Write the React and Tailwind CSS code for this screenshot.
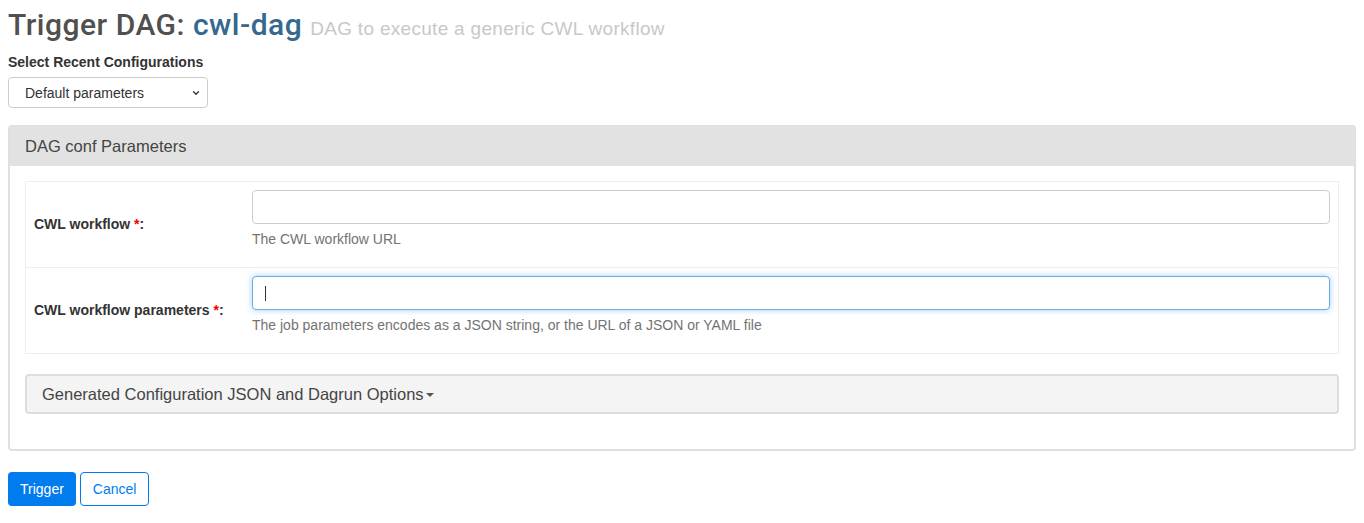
import { ChevronDown } from "lucide-react";

function FieldRow({ label, help, focused, last }) {
    return (
        <div className={`flex ${last ? "" : "border-b border-[#eee]"}`}>
            {/* label cell */}
            <div className="w-[218px] shrink-0 px-2 flex items-center">
                <label className="text-[14px] font-bold text-[#333]">
                    {label} <span className="text-[#e00]">*</span>:
                </label>
            </div>
            {/* input cell */}
            <div className="flex-1 px-2 pt-2 pb-2">
                <div
                    className={`h-[34px] rounded-[4px] border bg-white flex items-center px-3 ${
                        focused
                            ? "border-[#66afe9] shadow-[0_0_6px_rgba(102,175,233,0.6)]"
                            : "border-[#ccc]"
                    }`}
                >
                    {focused && <span className="block w-px h-[15px] bg-[#333]" />}
                </div>
                <p className="mt-[5px] mb-[10px] text-[14px] leading-[20px] text-[#737373]">{help}</p>
            </div>
        </div>
    );
}

export default function App() {
    return (
        <div className="px-2 pb-4 font-['Liberation_Sans',Arial,sans-serif] text-[#333]">
            {/* Title */}
            <h2 className="pt-2 h-[41px] text-[30px] leading-[33px] tracking-[0.5px] font-medium font-['Roboto',Arial,sans-serif] text-[#51504f]">
                Trigger DAG: <span className="text-[#34688f]">cwl-dag</span>{" "}
                <small className="text-[19px] leading-none tracking-[0.3px] font-normal font-['Liberation_Sans',Arial,sans-serif] text-[#c8c8c8]">
                    DAG to execute a generic CWL workflow
                </small>
            </h2>

            {/* Recent configs */}
            <label className="block mt-[11px] text-[14px] leading-[20px] font-bold text-[#333]">
                Select Recent Configurations
            </label>
            <div className="relative mt-[5px] w-[200px]">
                <select className="appearance-none w-full h-[31px] pt-[2px] rounded-[4px] border border-[#ccc] bg-white pl-4 pr-6 text-[14px] text-[#333] outline-none">
                    <option>Default parameters</option>
                </select>
                <ChevronDown className="absolute right-[7px] top-[11px] w-[10px] h-[10px] text-[#333] pointer-events-none" strokeWidth={3} />
            </div>

            {/* DAG conf panel */}
            <div className="mt-[17px] rounded-[4px] border-2 border-[#e0e0e0] overflow-hidden">
                <div className="h-[39px] bg-[#e2e2e2] flex items-center px-[15px] text-[16.5px] text-[#444]">
                    DAG conf Parameters
                </div>
                <div className="p-[15px] pb-[35px]">
                    <div className="border border-[#eee]">
                        <FieldRow label="CWL workflow" help="The CWL workflow URL" />
                        <FieldRow
                            label="CWL workflow parameters"
                            help="The job parameters encodes as a JSON string, or the URL of a JSON or YAML file"
                            focused
                            last
                        />
                    </div>

                    <div className="mt-[20px] h-[40px] rounded-[4px] border-2 border-[#dddddd] bg-[#f4f4f4] flex items-center px-[15px] text-[16.5px] text-[#444]">
                        Generated Configuration JSON and Dagrun Options
                        <span className="ml-[2px] mt-[1px] inline-block w-0 h-0 border-l-[4px] border-r-[4px] border-t-[4px] border-l-transparent border-r-transparent border-t-[#555]" />
                    </div>
                </div>
            </div>

            {/* Actions */}
            <div className="mt-[21px] flex gap-1">
                <button className="h-[34px] px-3 rounded-[4px] bg-[#017cee] text-white text-[14px]">Trigger</button>
                <button className="h-[34px] px-3 rounded-[4px] border border-[#017cee] bg-white text-[#017cee] text-[14px]">
                    Cancel
                </button>
            </div>
        </div>
    );
}
